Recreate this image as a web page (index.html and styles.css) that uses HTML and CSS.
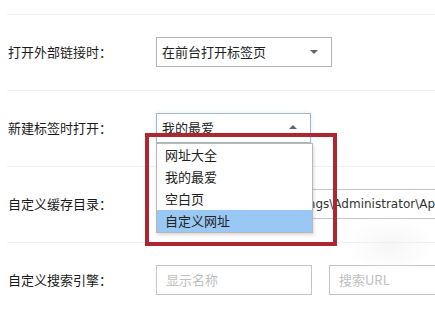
FILE: index.html
```html
<html>
<head>
<meta charset="utf-8">
<title>设置</title>
<link rel="stylesheet" href="styles.css">
</head>
<body>
<div class="panel">
    <div class="row">
        <div class="label">打开外部链接时：</div>
        <div class="select wide">在前台打开标签页<span class="arrow down"></span></div>
    </div>
    <div class="row">
        <div class="label">新建标签时打开：</div>
        <div class="select open">我的最爱<span class="arrow up"></span>
            <div class="list">
                <div class="opt">网址大全</div>
                <div class="opt">我的最爱</div>
                <div class="opt">空白页</div>
                <div class="opt hot">自定义网址</div>
            </div>
            <div class="mark"></div>
        </div>
    </div>
    <div class="row">
        <div class="label">自定义缓存目录：</div>
        <div class="input path">C:\Documents and Settings\Administrator\Application Data</div>
    </div>
    <div class="row">
        <div class="label">自定义搜索引擎：</div>
        <div class="input hint">显示名称</div>
        <div class="input hint second">搜索URL</div>
        <div class="blur"></div>
    </div>
</div>
<div class="next">设置标签页字体的默认值</div>
</body>
</html>
```

FILE: styles.css
```css
body {
    margin: 0;
    background: #fff;
    font-family: "Noto Sans CJK SC", "Liberation Sans", sans-serif;
    font-size: 13px;
    color: #222;
    overflow: hidden;
}
.panel {
    padding-top: 14px;
    margin-left: 7px;
}
.row {
    position: relative;
    display: flex;
    align-items: flex-start;
    height: 76px;
    box-sizing: border-box;
    padding-top: 22px;
    border-top: 1px solid #f0f0f0;
}
.label {
    width: 148px;
    padding-left: 1px;
    line-height: 30px;
    flex-shrink: 0;
    color: #1a1a1a;
}
.select {
    position: relative;
    width: 155px;
    height: 30px;
    box-sizing: border-box;
    border: 1px solid #b4b4b4;
    padding-left: 5px;
    line-height: 28px;
    background: #fff;
    flex-shrink: 0;
}
.select.wide {
    width: 176px;
}
.select.open {
    border-color: #a9b6c2;
    box-shadow: 0 0 4px #d2eef8;
}
.arrow {
    position: absolute;
    top: 12px;
    width: 0;
    height: 0;
    border-left: 4px solid transparent;
    border-right: 4px solid transparent;
}
.arrow.down {
    right: 13px;
    border-top: 4px solid #666;
}
.arrow.up {
    right: 13px;
    top: 11px;
    border-bottom: 4px solid #666;
}
.list {
    position: absolute;
    top: 29px;
    left: -1px;
    width: 157px;
    box-sizing: border-box;
    border: 1px solid #b8b8b8;
    background: #fff;
    box-shadow: 1px 2px 3px rgba(0, 0, 0, 0.15);
    z-index: 5;
}
.opt {
    height: 22px;
    line-height: 22px;
    padding-left: 8px;
}
.opt.hot {
    background: #99c8f5;
}
.mark {
    position: absolute;
    left: -12px;
    top: 19px;
    width: 192px;
    height: 113px;
    box-sizing: border-box;
    border: 4px solid #ad2730;
    z-index: 6;
}
.input {
    height: 30px;
    box-sizing: border-box;
    border: 1px solid #c4c4c4;
    padding-left: 9px;
    line-height: 28px;
    white-space: nowrap;
    overflow: hidden;
    flex-shrink: 0;
}
.path {
    width: 400px;
    font-family: "DejaVu Sans", sans-serif;
    font-size: 12px;
    color: #333;
    padding-left: 8px;
}
.hint {
    width: 156px;
    color: #c0c0c0;
}
.second {
    margin-left: 17px;
    width: 120px;
}
.blur {
    position: absolute;
    right: 0;
    top: -28px;
    width: 90px;
    height: 60px;
    background: radial-gradient(ellipse at center, rgba(240, 240, 240, 0.6), rgba(255, 255, 255, 0) 70%);
}
.next {
    margin: 13px 0 0 28px;
    font-size: 20px;
    line-height: 26px;
    color: #111;
    white-space: nowrap;
}
```
